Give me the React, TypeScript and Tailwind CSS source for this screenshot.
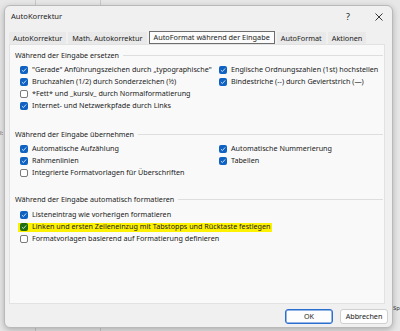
import React from 'react';

type Item = { label: string; checked: boolean; mark?: boolean };

const groups: { title: string; left: Item[]; right: Item[] }[] = [
  {
    title: 'Während der Eingabe ersetzen',
    left: [
      { label: '"Gerade" Anführungszeichen durch „typographische"', checked: true },
      { label: 'Bruchzahlen (1/2) durch Sonderzeichen (½)', checked: true },
      { label: '*Fett* und _kursiv_ durch Normalformatierung', checked: false },
      { label: 'Internet- und Netzwerkpfade durch Links', checked: true },
    ],
    right: [
      { label: 'Englische Ordnungszahlen (1st) hochstellen', checked: true },
      { label: 'Bindestriche (--) durch Geviertstrich (—)', checked: true },
    ],
  },
  {
    title: 'Während der Eingabe übernehmen',
    left: [
      { label: 'Automatische Aufzählung', checked: true },
      { label: 'Rahmenlinien', checked: true },
      { label: 'Integrierte Formatvorlagen für Überschriften', checked: false },
    ],
    right: [
      { label: 'Automatische Nummerierung', checked: true },
      { label: 'Tabellen', checked: true },
    ],
  },
  {
    title: 'Während der Eingabe automatisch formatieren',
    left: [
      { label: 'Listeneintrag wie vorherigen formatieren', checked: true },
      { label: 'Linken und ersten Zeileneinzug mit Tabstopps und Rücktaste festlegen', checked: true, mark: true },
      { label: 'Formatvorlagen basierend auf Formatierung definieren', checked: false },
    ],
    right: [],
  },
];

function Box({ checked, mark }: { checked: boolean; mark?: boolean }) {
  if (!checked) {
    return <span className="w-[8px] h-[8px] shrink-0 rounded-[2px] border border-[#7a7a7a] bg-white" />;
  }
  return (
    <span
      className={`w-[8px] h-[8px] shrink-0 rounded-[2px] flex items-center justify-center ${
        mark ? 'bg-[#1f6f12]' : 'bg-[#0f62c2]'
      }`}
    >
      <svg width="6" height="6" viewBox="0 0 10 10">
        <path d="M1.5 5.2 L4 7.6 L8.6 2.4" fill="none" stroke="white" strokeWidth="1.3" />
      </svg>
    </span>
  );
}

function Row({ item }: { item: Item }) {
  return (
    <div className="h-[12px] flex items-center">
      <div
        className={`flex items-center gap-[4px] h-[9px] ${
          item.mark ? 'bg-[#fff200] -ml-[2px] pl-[2px] pr-[1px]' : ''
        }`}
      >
        <Box checked={item.checked} mark={item.mark} />
        <span className="whitespace-nowrap leading-none">{item.label}</span>
      </div>
    </div>
  );
}

function Tab({ label, active }: { label: string; active?: boolean }) {
  return (
    <div
      className={`px-[4px] flex items-center whitespace-nowrap ${
        active ? 'bg-[#fbfbfb] border border-[#6e6e6e] -mt-[1px] h-[13px]' : 'bg-[#e9e9e9] h-[12px]'
      }`}
    >
      {label}
    </div>
  );
}

export default function App() {
  return (
    <div
      className="w-[400px] h-[331px] bg-[#e7e7e7] relative overflow-hidden text-[7.2px] text-[#1b1b1b]"
      style={{ fontFamily: '"Noto Sans", "Open Sans", sans-serif' }}
    >
      {/* word window behind */}
      <div className="absolute left-[35px] top-0 w-px h-full bg-[#c9c9c9]" />
      <div className="absolute left-[100px] top-0 w-px h-full bg-[#c9c9c9]" />
      <div className="absolute left-[393px] top-[304px] text-[6px] text-[#333]">Sp</div>
      <div className="absolute left-0 top-[129px] text-[6px] text-[#555]">l:</div>

      {/* dialog */}
      <div className="absolute left-[4px] top-[5px] w-[389px] h-[323px] bg-[#f0f0f0] rounded-[6px] border border-[#b9b9b9] shadow-[0_2px_6px_rgba(0,0,0,0.25)] flex flex-col">
        <div className="h-[22px] flex items-center pl-[6px] pr-[9px] text-[7.6px]">
          <span>AutoKorrektur</span>
          <span className="ml-auto mr-[25px] text-[9px]">?</span>
          <svg width="8" height="8" viewBox="0 0 8 8">
            <path d="M0.5 0.5 L7.5 7.5 M7.5 0.5 L0.5 7.5" stroke="#222" strokeWidth="0.9" />
          </svg>
        </div>

        <div className="flex gap-[2px] pl-[4px] mt-[4px] h-[12px] text-[7.3px]">
          <Tab label="AutoKorrektur" />
          <Tab label="Math. Autokorrektur" />
          <Tab label="AutoFormat während der Eingabe" active />
          <Tab label="AutoFormat" />
          <Tab label="Aktionen" />
        </div>

        <div className="ml-[4px] mr-[7px] h-[260px] bg-[#f9f9f9] border border-[#e2e2e2] pt-[4px] pl-[5px] pr-[1px] flex flex-col">
          {groups.map((g, i) => (
            <div key={g.title} className={i === 0 ? '' : i === 1 ? 'mt-[16px]' : 'mt-[14px]'}>
              <div className="h-[12px] flex items-center gap-[4px]">
                <span className="whitespace-nowrap">{g.title}</span>
                <div className="flex-1 h-px bg-[#dedede]" />
              </div>
              <div className={`grid grid-cols-[199px_1fr] pl-[5px] ${i === 2 ? 'mt-[4px]' : 'mt-[3px]'}`}>
                <div>
                  {g.left.map((it) => (
                    <Row key={it.label} item={it} />
                  ))}
                </div>
                <div>
                  {g.right.map((it) => (
                    <Row key={it.label} item={it} />
                  ))}
                </div>
              </div>
            </div>
          ))}
        </div>

        <div className="flex justify-end gap-[7px] pr-[4px] mt-[5px]">
          <button className="w-[48px] h-[15px] rounded-[3px] bg-[#fdfdfd] border border-[#2a6fd0] shadow-[inset_0_0_0_0.5px_#2a6fd0] flex items-center justify-center">
            OK
          </button>
          <button className="w-[48px] h-[15px] rounded-[3px] bg-[#fdfdfd] border border-[#d0d0d0] flex items-center justify-center">
            Abbrechen
          </button>
        </div>
      </div>
    </div>
  );
}
